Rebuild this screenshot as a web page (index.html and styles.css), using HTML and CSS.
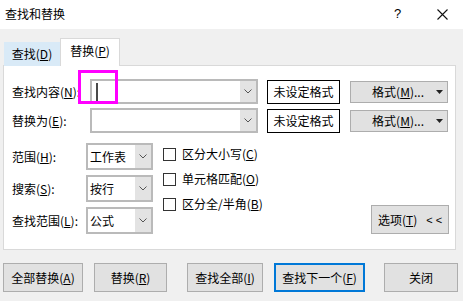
FILE: index.html
```html
<!DOCTYPE html>
<html>

<head>
    <meta charset="utf-8">
    <link rel="stylesheet" href="styles.css">
</head>

<body>
    <header class="titlebar">
        <span class="title">查找和替换</span>
        <span class="help">?</span>
        <svg class="close" width="11" height="11" viewBox="0 0 11 11">
            <path d="M0.5 0.5 L10.5 10.5 M10.5 0.5 L0.5 10.5" stroke="#111" stroke-width="1.1" fill="none" />
        </svg>
    </header>

    <nav class="tabs">
        <span class="tab">查找(<u>D</u>)</span>
        <span class="tab active">替换(<u>P</u>)</span>
    </nav>

    <section class="panel">
        <div class="find-row">
            <label class="lbl">查找内容(<u>N</u>):</label>
            <div class="combo wide">
                <span class="field"><span class="caret"></span></span>
                <span class="drop"><svg width="8" height="5" viewBox="0 0 8 5"><path d="M0.5 0.5 L4 4 L7.5 0.5" stroke="#555" fill="none" /></svg></span>
                <span class="mark"></span>
            </div>
            <div class="fmt-box">未设定格式</div>
            <button class="btn fmt-btn"><span>格式(<u>M</u>)...</span> <svg width="7" height="4" viewBox="0 0 7 4"><path d="M0 0 H7 L3.5 4 Z" fill="#222" /></svg></button>
        </div>
        <div class="find-row">
            <label class="lbl">替换为(<u>E</u>):</label>
            <div class="combo wide">
                <span class="field"></span>
                <span class="drop"><svg width="8" height="5" viewBox="0 0 8 5"><path d="M0.5 0.5 L4 4 L7.5 0.5" stroke="#555" fill="none" /></svg></span>
            </div>
            <div class="fmt-box">未设定格式</div>
            <button class="btn fmt-btn"><span>格式(<u>M</u>)...</span> <svg width="7" height="4" viewBox="0 0 7 4"><path d="M0 0 H7 L3.5 4 Z" fill="#222" /></svg></button>
        </div>

        <div class="options">
            <div class="sel-col">
                <div class="sel-row">
                    <label class="lbl short">范围(<u>H</u>):</label>
                    <div class="combo small">
                        <span class="field">工作表</span>
                        <span class="drop"><svg width="8" height="5" viewBox="0 0 8 5"><path d="M0.5 0.5 L4 4 L7.5 0.5" stroke="#555" fill="none" /></svg></span>
                    </div>
                </div>
                <div class="sel-row">
                    <label class="lbl short">搜索(<u>S</u>):</label>
                    <div class="combo small">
                        <span class="field">按行</span>
                        <span class="drop"><svg width="8" height="5" viewBox="0 0 8 5"><path d="M0.5 0.5 L4 4 L7.5 0.5" stroke="#555" fill="none" /></svg></span>
                    </div>
                </div>
                <div class="sel-row">
                    <label class="lbl short">查找范围(<u>L</u>):</label>
                    <div class="combo small">
                        <span class="field">公式</span>
                        <span class="drop"><svg width="8" height="5" viewBox="0 0 8 5"><path d="M0.5 0.5 L4 4 L7.5 0.5" stroke="#555" fill="none" /></svg></span>
                    </div>
                </div>
            </div>
            <div class="chk-col">
                <label class="chk"><span class="box"></span>区分大小写(<u>C</u>)</label>
                <label class="chk"><span class="box"></span>单元格匹配(<u>O</u>)</label>
                <label class="chk"><span class="box"></span>区分全/半角(<u>B</u>)</label>
            </div>
            <button class="btn more"><span>选项(<u>T</u>)</span><span class="arrows">&lt; &lt;</span></button>
        </div>
    </section>

    <footer class="actions">
        <button class="btn b-all">全部替换(<u>A</u>)</button>
        <button class="btn b-rep">替换(<u>R</u>)</button>
        <button class="btn b-findall">查找全部(<u>I</u>)</button>
        <button class="btn b-next">查找下一个(<u>F</u>)</button>
        <button class="btn b-close">关闭</button>
    </footer>
</body>

</html>
```

FILE: styles.css
```css
body {
    margin: 0;
    width: 463px;
    height: 301px;
    overflow: hidden;
    background-color: #f0f0f0;
    font-family: "Noto Sans CJK SC", "Noto Sans", sans-serif;
    font-size: 12px;
    line-height: 16px;
    color: #000;
}

u {
    text-decoration-thickness: 1px;
    text-underline-offset: 1px;
}

.titlebar {
    height: 29px;
    background-color: #fff;
    display: flex;
    align-items: center;
    padding-left: 5px;
}

.title {
    font-size: 12px;
    flex: 1;
    padding-bottom: 1px;
}

.help {
    font-family: "Liberation Sans", sans-serif;
    font-size: 13px;
    width: 14px;
    margin-right: 29px;
    padding-bottom: 2px;
}

.close {
    margin-right: 15px;
    margin-bottom: 1px;
}

.tabs {
    display: flex;
    align-items: flex-end;
    margin-top: 9px;
    padding-left: 4px;
    height: 28px;
    margin-bottom: -1px;
    position: relative;
    z-index: 1;
}

.tab {
    width: 56px;
    height: 24px;
    box-sizing: border-box;
    background-color: #d9eaf7;
    display: flex;
    align-items: center;
    justify-content: center;
    padding-bottom: 1px;
}

.tab.active {
    width: 60px;
    height: 28px;
    background-color: #fff;
    border: 1px solid #d9d9d9;
    border-bottom: none;
    padding-bottom: 3px;
}

.panel {
    margin-left: 3px;
    width: 453px;
    height: 185px;
    box-sizing: border-box;
    background-color: #fff;
    border: 1px solid #d9d9d9;
    padding: 13px 6px 0 8px;
}

.find-row {
    display: flex;
    align-items: center;
    height: 25px;
    margin-bottom: 4px;
}

.lbl {
    width: 78px;
    white-space: nowrap;
}

.lbl.short {
    width: 74px;
}

.combo {
    position: relative;
    display: flex;
    box-sizing: border-box;
    border: 2px solid #bababa;
    background-color: #fff;
}

.combo.wide {
    width: 168px;
    height: 25px;
}

.combo.small {
    width: 67px;
    height: 27px;
}

.field {
    flex: 1;
    display: flex;
    align-items: center;
    padding-left: 2px;
}

.caret {
    width: 2px;
    height: 18px;
    margin-left: 2px;
    background-color: #4a4a4a;
}

.drop {
    width: 16px;
    background-color: #e3e3e3;
    display: flex;
    align-items: center;
    justify-content: center;
}

.mark {
    position: absolute;
    left: -14px;
    top: -11px;
    width: 34px;
    height: 28px;
    border: 3px solid #f0f;
}

.fmt-box {
    margin-left: 9px;
    width: 73px;
    height: 24px;
    box-sizing: border-box;
    border: 1px solid #000;
    display: flex;
    align-items: center;
    justify-content: center;
}

.btn {
    font: inherit;
    color: #000;
    background-color: #e1e1e1;
    border: 1px solid #adadad;
    padding: 0;
    box-sizing: border-box;
    display: flex;
    align-items: center;
    justify-content: center;
}

.fmt-btn {
    margin-left: 10px;
    width: 98px;
    height: 22px;
    justify-content: flex-end;
    padding-right: 4px;
}

.fmt-btn svg {
    margin-left: 12px;
}

.options {
    display: flex;
    margin-top: 10px;
}

.sel-col {
    display: flex;
    flex-direction: column;
    gap: 5px;
}

.sel-row {
    display: flex;
    align-items: center;
}

.chk-col {
    display: flex;
    flex-direction: column;
    gap: 9px;
    margin-left: 10px;
    margin-top: 3px;
}

.chk {
    display: flex;
    align-items: center;
    height: 16px;
}

.box {
    width: 13px;
    height: 13px;
    box-sizing: border-box;
    border: 1px solid #333;
    margin-right: 6px;
}

.more {
    align-self: flex-end;
    margin-left: auto;
    width: 78px;
    height: 29px;
    gap: 9px;
}

.arrows {
    font-family: "Liberation Sans", sans-serif;
    font-size: 11px;
}

.actions {
    display: flex;
    margin-top: 13px;
    margin-left: 3px;
}

.actions .btn {
    height: 29px;
}

.b-all {
    width: 80px;
}

.b-rep {
    width: 73px;
    margin-left: 11px;
}

.b-findall {
    width: 76px;
    margin-left: 20px;
}

.b-next {
    width: 91px;
    margin-left: 11px;
    border: 2px solid #0078d7 !important;
}

.b-close {
    width: 74px;
    margin-left: 19px;
}
```
